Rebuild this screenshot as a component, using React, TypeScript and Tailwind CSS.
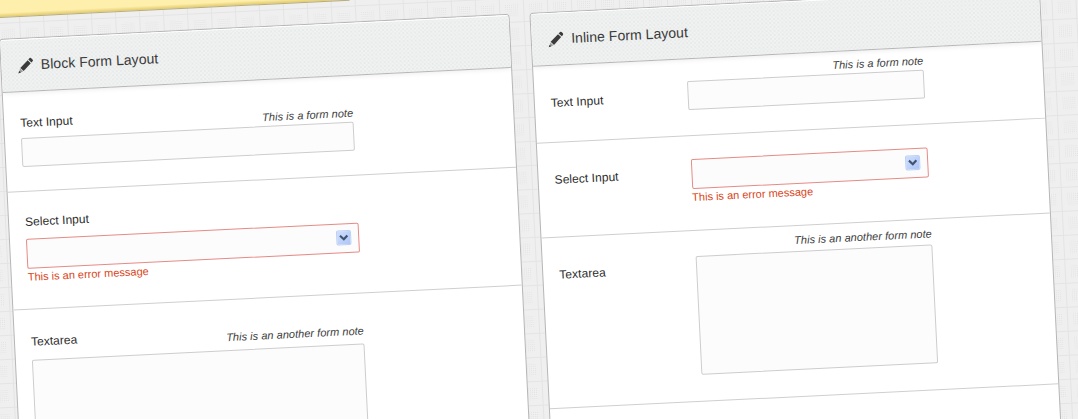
import React from "react";

function Pencil() {
  return (
    <svg width="16" height="16" viewBox="0 0 16 16" className="mt-[2px] shrink-0" fill="#3b3b3b">
      <path d="M11.2 2 12.4.8c.6-.6 1.2-.6 1.8 0l1.2 1.2c.6.6.6 1.2 0 1.8l-1.2 1.2z" />
      <path d="M10.5 2.7 13.5 5.7 6 13.2 2.8 10z" />
      <path d="M2.4 10.6 5.4 13.6 1.6 15z" fill="#9a9a9a" />
      <path d="M1.5 12.8 3.2 14.5.6 15.4z" />
    </svg>
  );
}

function Panel({ title, children }: { title: string; children: React.ReactNode }) {
  return (
    <section className="h-[520px] w-[511px] shrink-0 overflow-hidden rounded-[4px] border border-[#b6b6b6] bg-white">
      <header className="flex h-[53px] items-center gap-[7.5px] border-b border-[#b6b6b6] bg-[conic-gradient(#e8eaea_25%,#f1f2f2_0_50%,#ebeded_0_75%,#f1f2f2_0)] bg-[length:4px_4px] pl-[16px] shadow-[inset_0_1px_0_#fff,0_1px_5px_#00000014]">
        <Pencil />
        <h2 className="text-[14px] leading-[18px] tracking-[0.05px] text-[#3a3a3a]">{title}</h2>
      </header>
      {children}
    </section>
  );
}

function Label({ children }: { children: string }) {
  return <span className="block text-[12px] leading-[16px] tracking-[0.05px] text-[#2d2d2d]">{children}</span>;
}

function Note({ children }: { children: string }) {
  return <em className="block text-right text-[11px] leading-[14px] tracking-[0.03px] text-[#3c3c3c]">{children}</em>;
}

function ErrorText({ children }: { children: string }) {
  return <span className="mt-[1.5px] block text-[11px] leading-[14px] text-[#d9451a]">{children}</span>;
}

function Select() {
  return (
    <div className="flex h-[30px] items-center justify-end rounded-[2px] border border-[#e58b86] bg-[#fcfcfc] pr-[7px]">
      <span className="flex size-[15px] items-center justify-center rounded-[2px] border border-[#bccff5] bg-linear-to-br from-[#cfdefb] to-[#adc6f8]">
        <svg width="9" height="7" viewBox="0 0 9 7" fill="none" stroke="#41536f" strokeWidth="2.2" className="shrink-0">
          <path d="M.8 1.3 4.5 5 8.2 1.3" />
        </svg>
      </span>
    </div>
  );
}

export default function App() {
  return (
    <div className="flow-root h-[419px] w-[1078px] overflow-hidden bg-[#efefef] font-['Liberation_Sans',Arial,sans-serif]">
      <div className="-mt-[62px] -ml-[61.5px] h-[620px] w-[1240px] origin-[60px_100px] rotate-[-2.82deg] bg-[#f0f0f0] bg-[linear-gradient(90deg,#e4e4e4_1px,transparent_1px),linear-gradient(#e4e4e4_1px,transparent_1px),linear-gradient(90deg,#efefef_6px,transparent_6px_19px,#efefef_19px),linear-gradient(#efefef_6px,transparent_6px_19px,#efefef_19px),conic-gradient(#e2e2e2_25%,transparent_0)] bg-[length:24px_24px,24px_24px,24px_24px,24px_24px,2px_2px] bg-[position:9px_13px,9px_13px,9px_13px,9px_13px,0_0]">
        <div className="h-[79.5px] w-[412px] border-b border-[#b8ad7c] bg-[linear-gradient(#ffefad_0,#ffefad_75px,#e6cf72_78.5px)]" />
        <div className="flex gap-[20px] pt-[21px] pl-[60px]">
          <Panel title="Block Form Layout">
            <div className="h-[100px] border-b border-[#cfcfcf] pt-[23px] pl-[16px]">
              <div className="flex h-[23.5px] w-[333px] justify-between">
                <Label>Text Input</Label>
                <div className="pt-[7.5px]"><Note>This is a form note</Note></div>
              </div>
              <div className="h-[29px] w-[333px] rounded-[2px] border border-[#cdcdcd] bg-[#fcfcfc]" />
            </div>
            <div className="h-[118.5px] border-b border-[#cfcfcf] pt-[22.5px] pl-[16px]">
              <div className="h-[24.5px]"><Label>Select Input</Label></div>
              <div className="w-[333px]"><Select /></div>
              <ErrorText>This is an error message</ErrorText>
            </div>
            <div className="pt-[24px] pl-[16px]">
              <div className="flex h-[25.5px] w-[333px] justify-between">
                <Label>Textarea</Label>
                <div className="pt-[6px]"><Note>This is an another form note</Note></div>
              </div>
              <div className="h-[120px] w-[333px] rounded-[2px] border border-[#cdcdcd] bg-[#fcfcfc]" />
            </div>
          </Panel>
          <Panel title="Inline Form Layout">
            <div className="flex h-[77px] border-b border-[#cfcfcf] pt-[6.5px] pl-[16px]">
              <div className="w-[136.5px] pt-[22.5px]"><Label>Text Input</Label></div>
              <div className="flex w-[237.5px] flex-col">
                <Note>This is a form note</Note>
                <div className="mt-[2px] h-[28.5px] rounded-[2px] border border-[#cdcdcd] bg-[#fcfcfc]" />
              </div>
            </div>
            <div className="flex h-[95px] border-b border-[#cfcfcf] pt-[23px] pl-[16px]">
              <div className="w-[136.5px] pt-[6px]"><Label>Select Input</Label></div>
              <div className="w-[237.5px]">
                <Select />
                <ErrorText>This is an error message</ErrorText>
              </div>
            </div>
            <div className="flex h-[171px] border-b border-[#cfcfcf] pt-[7px] pl-[16px]">
              <div className="w-[136.5px] pt-[22px]"><Label>Textarea</Label></div>
              <div className="flex w-[237.5px] flex-col">
                <Note>This is an another form note</Note>
                <div className="mt-[4px] h-[119.5px] rounded-[2px] border border-[#cdcdcd] bg-[#fcfcfc]" />
              </div>
            </div>
          </Panel>
        </div>
      </div>
    </div>
  );
}
